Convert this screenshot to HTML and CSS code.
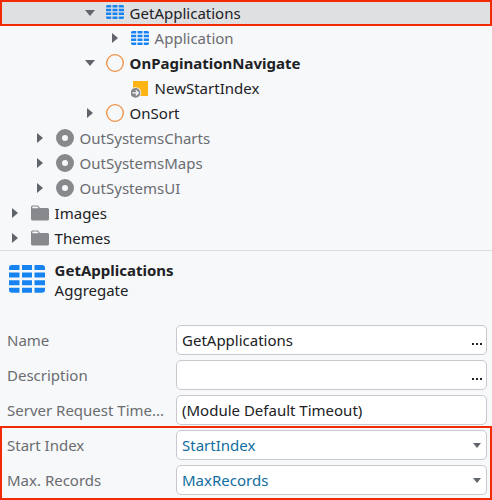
FILE: index.html
```html
<!DOCTYPE html>
<html lang="en">
<head>
<meta charset="utf-8">
<title>GetApplications</title>
<link rel="stylesheet" href="styles.css">
</head>
<body>
<svg class="defs" width="0" height="0">
  <symbol id="grid" viewBox="0 0 36 28">
    <path d="M3 0H10.500V5H0V3Q0 0 3 0ZM13 0H23V5H13ZM25.500 0H33Q36 0 36 3V5H25.500ZM0 7.600H10.500V12.600H0ZM13 7.600H23V12.600H13ZM25.500 7.600H36V12.600H25.500ZM0 15.200H10.500V20.200H0ZM13 15.200H23V20.200H13ZM25.500 15.200H36V20.200H25.500ZM0 22.800H10.500V27.800H3Q0 27.800 0 25ZM13 22.800H23V27.800H13ZM25.500 22.800H36V25Q36 27.800 33 27.800H25.500Z" fill="#1783f0"/>
  </symbol>
  <symbol id="action" viewBox="0 0 18 18"><circle cx="9" cy="9" r="8.300" fill="none" stroke="#ee8f43" stroke-width="1.300"/></symbol>
  <symbol id="module" viewBox="0 0 18 18"><circle cx="9" cy="9" r="6" fill="none" stroke="#88898d" stroke-width="6"/></symbol>
  <symbol id="folder" viewBox="0 0 18 16"><path d="M0 2Q0 .5 1.500 .5H7L9 3H16.500Q18 3 18 4.500V14Q18 15.500 16.500 15.500H1.500Q0 15.500 0 14Z" fill="#88898d"/><path d="M1.300 3.200V2.200Q1.300 1.500 2 1.500H6.400L7.800 3.200Z" fill="#f7f8fa"/></symbol>
  <symbol id="input" viewBox="0 0 18 17"><path d="M2 0H17V15H2Z" fill="#fdb515"/><circle cx="4.500" cy="11.900" r="5.700" fill="#f7f8fa"/><circle cx="4.500" cy="11.900" r="4.900" fill="#85878b"/><path d="M1.500 11.900H7M4.800 9.400L7.300 11.900L4.800 14.400" fill="none" stroke="#fff" stroke-width="1.300"/></symbol>
  <symbol id="down" viewBox="0 0 10 6"><path d="M0 0H10L5 6Z" fill="#5f656b"/></symbol>
  <symbol id="right" viewBox="0 0 6 10"><path d="M0 0L6 5L0 10Z" fill="#5f656b"/></symbol>
</svg>
<main class="panel">
  <section class="tree">
    <div class="row level-3 selected"><span class="arrow"><svg class="down"><use href="#down"/></svg></span><svg class="icon table"><use href="#grid"/></svg><span>GetApplications</span></div>
    <div class="row level-4 muted"><span class="arrow"><svg class="right"><use href="#right"/></svg></span><svg class="icon table"><use href="#grid"/></svg><span>Application</span></div>
    <div class="row level-3 strong"><span class="arrow"><svg class="down"><use href="#down"/></svg></span><svg class="icon"><use href="#action"/></svg><span>OnPaginationNavigate</span></div>
    <div class="row level-4"><span class="arrow"></span><svg class="icon variable"><use href="#input"/></svg><span>NewStartIndex</span></div>
    <div class="row level-3"><span class="arrow"><svg class="right"><use href="#right"/></svg></span><svg class="icon"><use href="#action"/></svg><span>OnSort</span></div>
    <div class="row level-1 muted"><span class="arrow"><svg class="right"><use href="#right"/></svg></span><svg class="icon"><use href="#module"/></svg><span>OutSystemsCharts</span></div>
    <div class="row level-1 muted"><span class="arrow"><svg class="right"><use href="#right"/></svg></span><svg class="icon"><use href="#module"/></svg><span>OutSystemsMaps</span></div>
    <div class="row level-1 muted"><span class="arrow"><svg class="right"><use href="#right"/></svg></span><svg class="icon"><use href="#module"/></svg><span>OutSystemsUI</span></div>
    <div class="row level-0"><span class="arrow"><svg class="right"><use href="#right"/></svg></span><svg class="icon folder"><use href="#folder"/></svg><span>Images</span></div>
    <div class="row level-0"><span class="arrow"><svg class="right"><use href="#right"/></svg></span><svg class="icon folder"><use href="#folder"/></svg><span>Themes</span></div>
  </section>
  <header class="summary">
    <svg class="summary-icon"><use href="#grid"/></svg>
    <div><div class="title">GetApplications</div><div>Aggregate</div></div>
  </header>
  <section class="properties">
    <div class="property"><span class="label">Name</span><div class="field"><span>GetApplications</span><span class="more"><i></i><i></i><i></i></span></div></div>
    <div class="property"><span class="label">Description</span><div class="field"><span></span><span class="more"><i></i><i></i><i></i></span></div></div>
    <div class="property"><span class="label">Server Request Time...</span><div class="field"><span>(Module Default Timeout)</span></div></div>
  </section>
  <section class="properties highlighted">
    <div class="property"><span class="label">Start Index</span><div class="field link"><span>StartIndex</span><svg class="caret"><use href="#down"/></svg></div></div>
    <div class="property"><span class="label">Max. Records</span><div class="field link"><span>MaxRecords</span><svg class="caret"><use href="#down"/></svg></div></div>
  </section>
</main>
</body>
</html>
```
FILE: styles.css
```css
* { box-sizing: border-box; }
body { margin: 0; background: #f7f8fa; color: #202124; font: 15px/20px "Noto Sans", sans-serif; }
svg { display: block; flex: none; }
.defs { position: absolute; }
.panel { width: 492px; height: 500px; overflow: hidden; }
.tree { height: 251px; border-bottom: 1px solid #dadcdf; }
.row { display: flex; align-items: center; height: 25px; white-space: nowrap; }
.row > span:last-child { line-height: 21px; margin: 2px 0 0 -0.4px; }
.selected { height: 26px; margin-bottom: -1px; border: 2px solid #f32b05; background: #dfe0e2; }
.selected > span:last-child { line-height: 20px; margin-top: 0; }
.level-0 { padding-left: 9px; }
.level-1 { padding-left: 34px; }
.level-3 { padding-left: 84px; }
.level-3.selected { padding-left: 82px; }
.level-4 { padding-left: 109px; }
.muted, .label { color: #6a6c70; }
.strong, .title { font-weight: 700; }
.arrow { display: flex; justify-content: center; width: 12px; margin-right: 10px; }
.down { width: 10px; height: 6px; margin-top: 1px; }
.selected .down { margin-top: 0; }
.right { width: 6px; height: 10px; }
.icon { width: 18px; height: 18px; margin: 1px 6px 0 0; }
.table { height: 14px; margin-top: 0; }
.selected .table { margin-bottom: 2px; }
.folder { height: 16px; margin-top: 1px; }
.variable { height: 17px; margin-top: 4px; }
.summary { display: flex; height: 74px; padding: 9px 9px 0; gap: 9.6px; }
.summary-icon { width: 36px; height: 28px; margin-top: 5px; }
.properties { height: 101px; padding-left: 7px; }
.property { display: flex; align-items: center; height: 30px; margin-bottom: 5px; }
.label { width: 169px; flex: none; white-space: nowrap; }
.field { display: flex; align-items: center; justify-content: space-between; width: 311px; height: 30px; padding: 0 4px 0 5px; border: 1px solid #c7c9ce; border-radius: 5px; background: #fff; }
.link { color: #106da0; }
.more { display: flex; gap: 2px; margin-top: 8px; }
.more i { width: 2px; height: 2px; background: #202124; }
.caret { width: 8px; height: 5px; margin: 1px 1px 0 0; }
.highlighted { height: 74px; padding: 2px 0 0 5px; border: 2px solid #f32b05; }
```
